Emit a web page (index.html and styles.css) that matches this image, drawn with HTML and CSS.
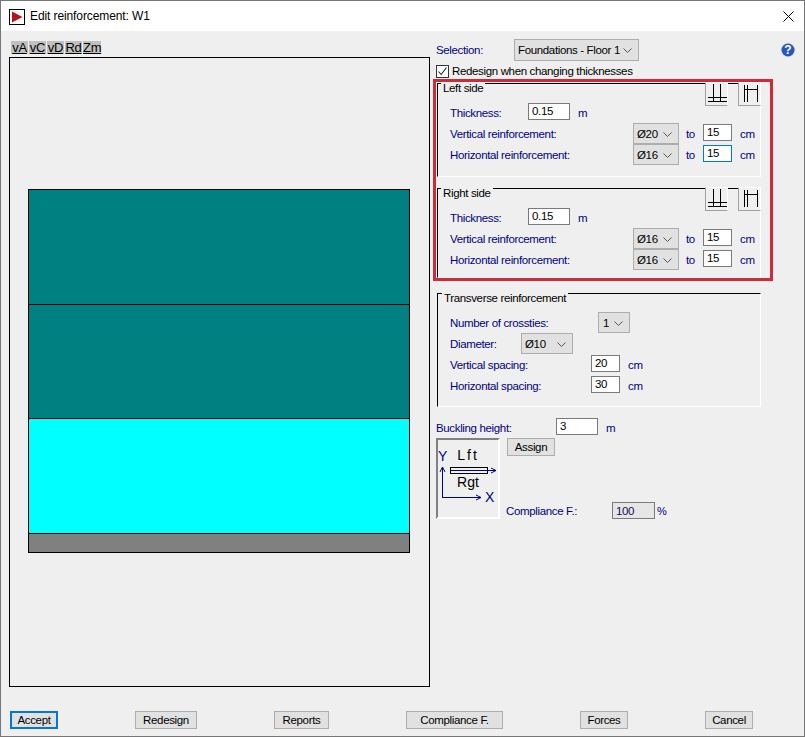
FILE: index.html
```html
<!DOCTYPE html>
<html lang="en">
<head>
<meta charset="utf-8">
<title>Edit reinforcement: W1</title>
<link rel="stylesheet" href="styles.css">
</head>
<body>
<div class="window">
  <header class="titlebar">
    <span class="appicon"><svg width="16" height="16" viewBox="0 0 16 16"><rect x="0.5" y="0.5" width="15" height="15" fill="#fff" stroke="#000"/><path d="M3 2.5 L13.5 8 L3 13.5 Z" fill="#b3141c"/></svg></span>
    <span class="wintitle">Edit reinforcement: W1</span>
    <svg class="close" width="11" height="11" viewBox="0 0 11 11"><path d="M0.5 0.5 L10.5 10.5 M10.5 0.5 L0.5 10.5" stroke="#000" fill="none"/></svg>
  </header>
  <main class="main">
    <section class="left">
      <nav class="tabs">
        <span class="tab">vA</span><span class="tab">vC</span><span class="tab">vD</span><span class="tab">Rd</span><span class="tab tab-wide">Zm</span>
      </nav>
      <div class="canvas">
        <div class="chart">
          <div class="seg seg-teal"></div>
          <div class="seg seg-teal"></div>
          <div class="seg seg-cyan"></div>
          <div class="seg seg-gray"></div>
        </div>
      </div>
    </section>
    <section class="right">
      <div class="selrow">
        <span class="lbl lbl-sel">Selection:</span>
        <span class="combo combo-sel">Foundations - Floor 1<svg class="chev" width="9" height="5" viewBox="0 0 9 5"><path d="M0.5 0.5 L4.5 4.5 L8.5 0.5" fill="none" stroke="#555"/></svg></span>
        <svg class="help" width="16" height="16" viewBox="0 0 16 16"><circle cx="8" cy="8" r="7.5" fill="#dfe6f5"/><circle cx="8" cy="8" r="6.5" fill="#2a55b8"/><text x="8" y="12" text-anchor="middle" class="helpq">?</text></svg>
      </div>
      <div class="checkrow">
        <span class="check"><svg width="11" height="11" viewBox="0 0 11 11"><path d="M1.5 5.5 L4.2 8.5 L9.5 1.5" fill="none" stroke="#222" stroke-width="1.1"/></svg></span>
        <span>Redesign when changing thicknesses</span>
      </div>
      <div class="highlight">
        <fieldset class="group group-left">
          <span class="gtitle">Left side</span>
          <span class="iconbtn ib1"><svg width="22" height="23" viewBox="0 0 22 23"><path d="M7.5 1 V18 M14.5 1 V18 M2 14.5 H21 M2 18.5 H21" fill="none" stroke="#000"/></svg></span>
          <span class="iconbtn ib2"><svg width="22" height="23" viewBox="0 0 22 23"><path d="M5.5 2 V19 M8.5 2 V19 M18.5 2 V19 M5 6.5 H19" fill="none" stroke="#000"/></svg></span>
          <div class="row row-thick"><span class="lbl lbl-thick">Thickness:</span><input class="inp inp-thick" value="0.15"><span class="unit">m</span></div>
          <div class="row"><span class="lbl lbl-reinf">Vertical reinforcement:</span><span class="combo combo-d">Ø20<svg class="chev" width="9" height="5" viewBox="0 0 9 5"><path d="M0.5 0.5 L4.5 4.5 L8.5 0.5" fill="none" stroke="#555"/></svg></span><span class="to">to</span><input class="inp inp-s" value="15"><span class="unit">cm</span></div>
          <div class="row"><span class="lbl lbl-reinf">Horizontal reinforcement:</span><span class="combo combo-d">Ø16<svg class="chev" width="9" height="5" viewBox="0 0 9 5"><path d="M0.5 0.5 L4.5 4.5 L8.5 0.5" fill="none" stroke="#555"/></svg></span><span class="to">to</span><input class="inp inp-s inp-focus" value="15"><span class="unit">cm</span></div>
        </fieldset>
        <fieldset class="group group-right">
          <span class="gtitle">Right side</span>
          <span class="iconbtn ib1"><svg width="22" height="23" viewBox="0 0 22 23"><path d="M7.5 1 V18 M14.5 1 V18 M2 14.5 H21 M2 18.5 H21" fill="none" stroke="#000"/></svg></span>
          <span class="iconbtn ib2"><svg width="22" height="23" viewBox="0 0 22 23"><path d="M5.5 2 V19 M8.5 2 V19 M18.5 2 V19 M5 6.5 H19" fill="none" stroke="#000"/></svg></span>
          <div class="row row-thick"><span class="lbl lbl-thick">Thickness:</span><input class="inp inp-thick" value="0.15"><span class="unit">m</span></div>
          <div class="row"><span class="lbl lbl-reinf">Vertical reinforcement:</span><span class="combo combo-d">Ø16<svg class="chev" width="9" height="5" viewBox="0 0 9 5"><path d="M0.5 0.5 L4.5 4.5 L8.5 0.5" fill="none" stroke="#555"/></svg></span><span class="to">to</span><input class="inp inp-s" value="15"><span class="unit">cm</span></div>
          <div class="row"><span class="lbl lbl-reinf">Horizontal reinforcement:</span><span class="combo combo-d">Ø16<svg class="chev" width="9" height="5" viewBox="0 0 9 5"><path d="M0.5 0.5 L4.5 4.5 L8.5 0.5" fill="none" stroke="#555"/></svg></span><span class="to">to</span><input class="inp inp-s" value="15"><span class="unit">cm</span></div>
        </fieldset>
      </div>
      <fieldset class="group group-trans">
        <span class="gtitle gtitle-trans">Transverse reinforcement</span>
        <div class="row"><span class="lbl lbl-cross">Number of crossties:</span><span class="combo combo-n">1<svg class="chev" width="9" height="5" viewBox="0 0 9 5"><path d="M0.5 0.5 L4.5 4.5 L8.5 0.5" fill="none" stroke="#555"/></svg></span></div>
        <div class="row"><span class="lbl lbl-dia">Diameter:</span><span class="combo combo-w">Ø10<svg class="chev" width="9" height="5" viewBox="0 0 9 5"><path d="M0.5 0.5 L4.5 4.5 L8.5 0.5" fill="none" stroke="#555"/></svg></span></div>
        <div class="row"><span class="lbl lbl-space">Vertical spacing:</span><input class="inp inp-s" value="20"><span class="unit">cm</span></div>
        <div class="row"><span class="lbl lbl-space">Horizontal spacing:</span><input class="inp inp-s" value="30"><span class="unit">cm</span></div>
      </fieldset>
      <div class="row row-buck"><span class="lbl lbl-buck">Buckling height:</span><input class="inp inp-thick" value="3"><span class="unit">m</span></div>
      <div class="lower">
        <div class="diagram">
          <svg width="60" height="77" viewBox="0 0 60 77">
            <text x="0" y="21" class="axis">Y</text>
            <path d="M4.5 58 V28 M2 32 L4.5 27 L7 32 M4.5 57.5 H43 M38 55 L43 57.5 L38 60" fill="none" stroke="#000080"/>
            <text x="47" y="62" class="axis">X</text>
            <text x="30" y="20" text-anchor="middle" class="dtext dtext-l">Lft</text>
            <path d="M12 30.5 H58 M53 28 L58 30.5 L53 33" fill="none" stroke="#000080"/>
            <rect x="12.5" y="27.5" width="37" height="6" fill="none" stroke="#000"/>
            <text x="30" y="47" text-anchor="middle" class="dtext">Rgt</text>
          </svg>
        </div>
        <div class="lowerside">
          <button class="btn btn-assign" type="button">Assign</button>
          <div class="compl"><span class="lbl lbl-compl">Compliance F.:</span><input class="inp inp-compl" value="100" disabled><span class="pct">%</span></div>
        </div>
      </div>
    </section>
  </main>
  <footer class="footer">
    <button class="btn btn-accept" type="button">Accept</button>
    <button class="btn btn-redesign" type="button">Redesign</button>
    <button class="btn btn-reports" type="button">Reports</button>
    <button class="btn btn-compl" type="button">Compliance F.</button>
    <button class="btn btn-forces" type="button">Forces</button>
    <button class="btn btn-cancel" type="button">Cancel</button>
  </footer>
</div>
</body>
</html>
```
FILE: styles.css
```css
* { box-sizing: border-box; }
html, body { margin: 0; padding: 0; }
body {
  width: 805px;
  height: 737px;
  overflow: hidden;
  font-family: "Liberation Sans", Arial, sans-serif;
  font-size: 11.5px;
  letter-spacing: -0.35px;
  color: #000;
}
.window {
  width: 805px;
  height: 737px;
  background: #efefef;
  border: 1px solid #767676;
  display: flex;
  flex-direction: column;
}
.titlebar {
  height: 30px;
  background: #fff;
  display: flex;
  align-items: center;
  padding-left: 8px;
  padding-right: 10px;
  flex: none;
}
.appicon { width: 16px; height: 16px; display: block; margin-right: 5px; margin-top: 1px; }
.appicon svg { display: block; }
.wintitle { font: 12px "Liberation Sans", Arial, sans-serif; letter-spacing: -0.1px; color: #000; }
.close { margin-left: auto; }
.main { display: flex; padding-top: 8px; padding-left: 8px; flex: none; height: 656px; }
.left { width: 421px; padding-top: 2px; flex: none; }
.tabs { display: flex; gap: 1px; height: 13px; margin-left: 2px; margin-bottom: 3px; }
.tab {
  width: 17px;
  height: 13px;
  background: #c0c0c0;
  color: #000;
  text-decoration: underline;
  text-align: center;
  font: 13px/13px "Liberation Sans", Arial, sans-serif;
  letter-spacing: -0.3px;
}
.tab-wide { width: 18px; }
.canvas {
  width: 421px;
  height: 630px;
  border: 1px solid #000;
  padding: 131px 0 0 18px;
}
.chart { width: 382px; height: 364px; border: 1px solid #000; display: flex; flex-direction: column; }
.seg { border-bottom: 1px solid #000; flex: none; }
.seg-teal { background: #008080; height: 115px; }
.seg-teal + .seg-teal { height: 114px; }
.seg-cyan { background: #00ffff; height: 115px; }
.seg-gray { background: #808080; height: 18px; border-bottom: 0; }
.right { margin-left: 3px; width: 371px; flex: none; }
.selrow { display: flex; align-items: center; height: 22px; margin-left: 3px; width: 360px; }
.lbl { color: #000080; flex: none; }
.lbl-sel { width: 78px; }
.combo {
  display: flex;
  align-items: center;
  background: #e1e1e1;
  border: 1px solid #adadad;
  padding-left: 3px;
  flex: none;
  color: #000;
  position: relative;
}
.chev { position: absolute; right: 6px; top: 50%; margin-top: -2px; }
.combo-sel { width: 125px; height: 22px; }
.combo-d { width: 46px; height: 21px; padding-left: 3px; }
.combo-n { width: 32px; height: 21px; padding-left: 4px; }
.combo-w { width: 52px; height: 21px; padding-left: 3px; }
.help { margin-left: auto; }
.helpq { fill: #fff; font-size: 12px; font-weight: 700; font-family: "Liberation Sans", Arial, sans-serif; letter-spacing: 0; }
.checkrow { display: flex; align-items: center; height: 14px; margin: 3px 0 1px 3px; }
.check {
  width: 13px;
  height: 13px;
  background: #fff;
  border: 1px solid #333;
  margin-right: 3px;
  display: block;
}
.check svg { display: block; }
.highlight {
  width: 340px;
  height: 202px;
  border: 3px solid #ce2a3a;
  padding: 1px 0 0 1px;
}
.group {
  position: relative;
  margin: 0;
  padding: 19px 0 0 12px;
  width: 324px;
  border-top: 1px solid #000;
  border-left: 1px solid #000;
  border-right: 1px solid #fff;
  border-bottom: 1px solid #fff;
  min-width: 0;
}
.group-left { height: 94px; margin-bottom: 11px; }
.group-right { height: 90px; }
.group-trans { height: 114px; margin-left: 4px; margin-top: 12px; padding-top: 18px; }
.gtitle {
  position: absolute;
  left: 3px;
  top: -1px;
  height: 12px;
  line-height: 11px;
  padding: 0 2px 0 2px;
  background: #efefef;
  color: #000;
}
.gtitle-trans { left: 4px; }
.iconbtn {
  position: absolute;
  top: -2px;
  width: 23px;
  height: 24px;
  background: #efefef;
  border-left: 1px solid #a0a0a0;
  border-bottom: 1px solid #a0a0a0;
  border-top: 1px solid #fff;
  border-right: 1px solid #fff;
}
.iconbtn svg { display: block; }
.ib1 { left: 267px; }
.ib2 { left: 300px; }
.row { display: flex; align-items: center; height: 21px; }
.row-thick { height: 19px; margin-bottom: 1px; }
.lbl-thick { width: 78px; }
.lbl-reinf { width: 183px; }
.lbl-cross { width: 148px; }
.lbl-dia { width: 71px; }
.lbl-space { width: 141px; }
.lbl-buck { width: 120px; }
.inp {
  height: 17px;
  margin: 0 0 2px 0;
  padding: 0 0 2px 3px;
  background: #fff;
  border: 1px solid #7a7a7a;
  font: 11.5px "Liberation Sans", Arial, sans-serif;
  letter-spacing: -0.35px;
  color: #000;
  flex: none;
  border-radius: 0;
  outline: none;
}
.inp-thick { width: 42px; }
.inp-s { width: 29px; }
.inp-focus { border-color: #0078d7; }
.unit { color: #000080; margin-left: 8px; }
.to { color: #000080; width: 24px; padding-left: 7px; flex: none; }
.row-buck { margin: 11px 0 1px 3px; height: 19px; }
.lower { display: flex; margin-left: 3px; height: 81px; }
.diagram {
  width: 64px;
  height: 81px;
  background: #efefef;
  border-top: 2px solid #808080;
  border-left: 2px solid #808080;
  border-right: 2px solid #fff;
  border-bottom: 2px solid #fff;
  flex: none;
}
.diagram svg { display: block; }
.axis { font: 14px "Liberation Sans", Arial, sans-serif; fill: #000080; letter-spacing: 0; }
.dtext { font: 14px "Liberation Sans", Arial, sans-serif; fill: #000; letter-spacing: 0; }
.dtext-l { letter-spacing: 2px; }
.lowerside { margin-left: 7px; display: flex; flex-direction: column; align-items: flex-start; flex: 1; }
.compl { display: flex; align-items: center; margin-top: auto; height: 17px; }
.lbl-compl { width: 106px; margin-left: -1px; }
.inp-compl { width: 43px; height: 17px; margin: 0; background: #e6e6e6; color: #1a0a50; padding-bottom: 0; }
.pct { color: #000080; margin-left: 2px; font-size: 11px; }
.btn {
  height: 18px;
  padding: 0;
  margin: 0;
  background: #e1e1e1;
  border: 1px solid #adadad;
  border-radius: 0;
  font: 11.5px "Liberation Sans", Arial, sans-serif;
  letter-spacing: -0.35px;
  color: #000;
  flex: none;
}
.btn-assign { width: 48px; }
.footer { display: flex; gap: 77px; padding-left: 9px; margin-top: 24px; }
.btn-accept { width: 48px; border: 2px solid #0078d7; }
.btn-redesign { width: 62px; }
.btn-reports { width: 55px; }
.btn-compl { width: 97px; }
.btn-forces { width: 48px; }
.btn-cancel { width: 48px; }
```
